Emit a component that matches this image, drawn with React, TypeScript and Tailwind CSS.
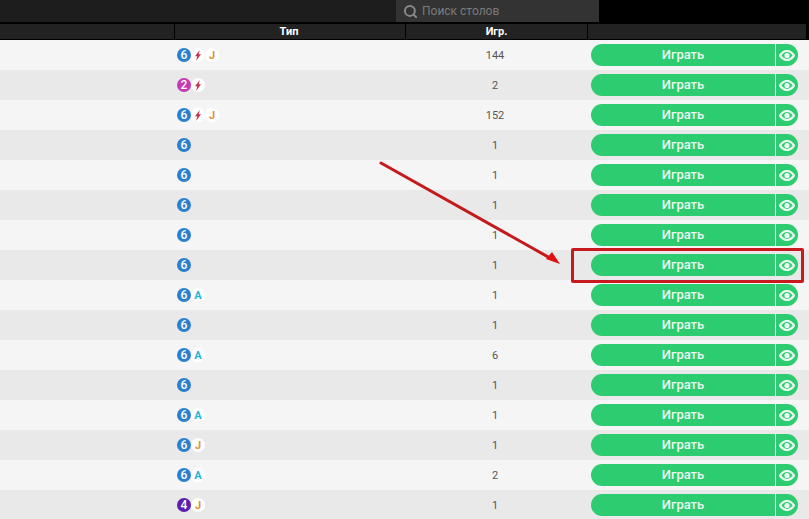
import { Search } from 'lucide-react';

type Mark = 'bolt' | 'J' | 'A';

interface IRow {
  seats: number;
  marks: Mark[];
  players: number;
}

const rows: IRow[] = [
  { seats: 6, marks: ['bolt', 'J'], players: 144 },
  { seats: 2, marks: ['bolt'], players: 2 },
  { seats: 6, marks: ['bolt', 'J'], players: 152 },
  { seats: 6, marks: [], players: 1 },
  { seats: 6, marks: [], players: 1 },
  { seats: 6, marks: [], players: 1 },
  { seats: 6, marks: [], players: 1 },
  { seats: 6, marks: [], players: 1 },
  { seats: 6, marks: ['A'], players: 1 },
  { seats: 6, marks: [], players: 1 },
  { seats: 6, marks: ['A'], players: 6 },
  { seats: 6, marks: [], players: 1 },
  { seats: 6, marks: ['A'], players: 1 },
  { seats: 6, marks: ['J'], players: 1 },
  { seats: 6, marks: ['A'], players: 2 },
  { seats: 4, marks: ['J'], players: 1 },
];

const seatColor = (seats: number) => {
  if (seats === 2) return 'bg-[#c43ab5]';
  if (seats === 4) return 'bg-[#5a1fb0]';
  return 'bg-[#2a7fcf]';
};

const EyeIcon = () => (
  <svg width="16" height="11" viewBox="0 0 16 11" className="-ml-px">
    <path
      d="M1 5.5 C3.5 2 5.5 1 8 1 S12.5 2 15 5.5 C12.5 9 10.5 10 8 10 S3.5 9 1 5.5 Z"
      fill="none"
      stroke="#eafaf1"
      strokeWidth="2.2"
    />
    <circle cx="8" cy="5.5" r="2.6" fill="#eafaf1" />
  </svg>
);

const MarkBadge = ({ mark }: { mark: Mark }) => (
  <span className="flex h-[14px] w-[14px] items-center justify-center rounded-full bg-white text-[11px] font-bold leading-none">
    {mark === 'bolt' && (
      <svg width="8" height="11" viewBox="0 0 8 11">
        <path d="M5.8 0 L1 6.2 L3.3 6.2 L2 11 L7 4.3 L4.6 4.3 Z" fill="#c9304a" />
      </svg>
    )}
    {mark === 'J' && <span className="text-[#e0953c]">J</span>}
    {mark === 'A' && <span className="text-[#22b5d6]">A</span>}
  </span>
);

const TableRow = ({ seats, marks, players, index }: IRow & { index: number }) => (
  <div
    className={`grid h-[30px] grid-cols-[175px_231px_182px_1fr] items-center ${
      index % 2 === 0 ? 'bg-[#f5f5f5]' : 'bg-[#e9e9e9]'
    }`}
  >
    <div />
    <div className="flex items-center pl-[2px]">
      <span
        className={`flex h-[14px] w-[14px] items-center justify-center rounded-full text-[12px] font-medium leading-none text-white ${seatColor(seats)}`}
      >
        {seats}
      </span>
      {marks.map((mark) => (
        <MarkBadge key={mark} mark={mark} />
      ))}
    </div>
    <div className="pr-[4px] pt-[2px] text-center text-[11px] text-[#555555]">{players}</div>
    <div className="pl-[3px]">
      <div className="flex h-[22px] w-[207px] overflow-hidden rounded-full bg-[#2ecc71] text-[#eafaf1]">
        <span className="flex-1 text-center text-[13px] font-medium leading-[22px]">Играть</span>
        <span className="flex w-[23px] items-center justify-center border-l border-white">
          <EyeIcon />
        </span>
      </div>
    </div>
  </div>
);

export default function App() {
  return (
    <div className="relative h-[519px] w-[809px] overflow-hidden bg-black font-['Roboto',sans-serif]">
      <div className="flex h-[22px]">
        <div className="w-[396px] bg-[#1d1d1d]" />
        <div className="flex w-[203px] items-center gap-[4px] bg-[#333333] pl-[7px] text-[12px] text-[#7b7b7b]">
          <Search size={15} strokeWidth={3.2} className="text-[#8a8a8a]" />
          <span>Поиск столов</span>
        </div>
      </div>
      <div className="mt-[2px] grid h-[15px] grid-cols-[174px_230px_181px_218px] gap-x-px text-center text-[11px] font-bold leading-[15px] text-white">
        <div className="bg-[#222222]" />
        <div className="bg-[#222222] pr-[2px]">Тип</div>
        <div className="bg-[#222222]">Игр.</div>
        <div className="bg-[#222222]" />
      </div>
      <div className="mt-px">
        {rows.map((row, index) => (
          <TableRow key={index} index={index} {...row} />
        ))}
      </div>

      {/* annotation drawn over the table */}
      <div className="absolute left-[571px] top-[248px] h-[35px] w-[233px] rounded-[2px] border-[3px] border-[#c8191e]" />
      <svg className="absolute left-0 top-0" width="809" height="519" viewBox="0 0 809 519">
        <line x1="381" y1="163" x2="550" y2="258" stroke="#c41a1a" strokeWidth="3" strokeLinecap="round" />
        <path d="M560 264 L546 259 L552 252 Z" fill="#e01010" />
      </svg>
    </div>
  );
}
